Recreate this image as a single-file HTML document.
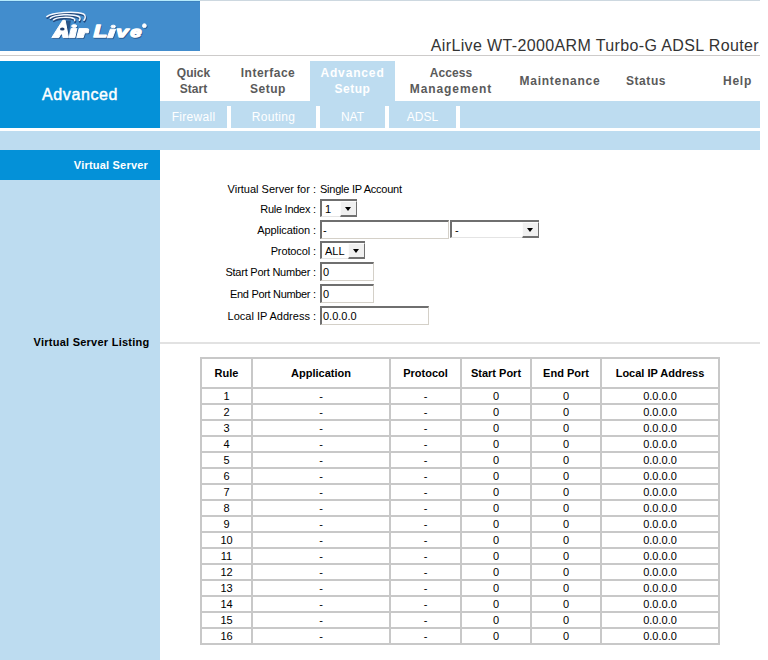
<!DOCTYPE html>
<html><head><meta charset="utf-8">
<style>
html,body{margin:0;padding:0;background:#fff;}
body{width:768px;height:660px;overflow:hidden;position:relative;font-family:"Liberation Sans",sans-serif;}
.a{position:absolute;}
.t{position:absolute;white-space:nowrap;line-height:1;}
.nav{position:absolute;font-size:12px;font-weight:bold;color:#5a5a5a;text-align:center;line-height:16px;white-space:nowrap;}
.sub{position:absolute;top:104px;height:27px;font-size:12px;color:#fff;text-align:center;line-height:27px;}
.sep{position:absolute;top:106px;width:4px;height:22px;background:#fff;}
.lbl{position:absolute;font-size:11px;color:#000;text-align:right;white-space:nowrap;line-height:1;}
.inp{position:absolute;box-sizing:border-box;border-style:solid;border-width:2px 1px 1px 2px;border-color:#6f6f6f #d4d0c8 #d4d0c8 #6f6f6f;background:#fff;font-size:11px;line-height:1;}
.sel{position:absolute;box-sizing:border-box;border-style:solid;border-width:2px 0 1px 2px;border-color:#6f6f6f #d4d0c8 #e4e4e4 #6f6f6f;background:#fff;font-size:11px;line-height:1;}
.btn{position:absolute;top:0;right:0;bottom:-1px;width:17px;box-sizing:border-box;background:#f0f0f0;border-style:solid;border-width:1px 1px 2px 1px;border-color:#fcfcfc #707070 #707070 #fcfcfc;}
.btn:after{content:"";position:absolute;left:4px;top:5px;border-left:3.5px solid transparent;border-right:3.5px solid transparent;border-top:4px solid #000;}
table.l{position:absolute;left:200px;top:357px;border-collapse:separate;border-spacing:0;border:1px solid #c8c8c8;font-size:11px;}
table.l td{border:1px solid #c8c8c8;padding:0;text-align:center;height:14px;line-height:14px;}
table.l tr.h td{height:28px;font-weight:bold;}
</style></head><body>
<div class="a" style="left:0;top:0;width:200px;height:1px;background:#b4eafc"></div><div class="a" style="left:200px;top:0;width:560px;height:1px;background:#cdd8e0"></div>
<div class="a" style="left:0;top:1px;width:200px;height:50px;background:#428dcd"></div><div class="a" style="left:0;top:1px;width:200px;height:1px;background:#3f83bf"></div>
<svg class="a" style="left:0;top:1px" width="200" height="50" viewBox="0 1 200 50">
<g fill="none" stroke-linecap="round">
<g stroke="#1c3d6e" stroke-width="2.2" opacity="0.85" transform="translate(0.5,1.2)">
<path d="M46.8,16.6 C52,12.5 75,10.5 83.5,14 C86,15.5 85.5,18.5 84,20.3"/>
<path d="M50.3,18.2 C55,14.5 72,13.5 78.5,16.5 C80.5,17.5 80.3,19 79.4,20.3"/>
<path d="M53.5,19.8 C57,17 70,16.5 73.8,18.7 C75,19.3 75,20 74.6,20.6"/>
</g>
<g stroke="#f4f8ff" stroke-width="1.5">
<path d="M46.8,16.6 C52,12.5 75,10.5 83.5,14 C86,15.5 85.5,18.5 84,20.3"/>
<path d="M50.3,18.2 C55,14.5 72,13.5 78.5,16.5 C80.5,17.5 80.3,19 79.4,20.3"/>
<path d="M53.5,19.8 C57,17 70,16.5 73.8,18.7 C75,19.3 75,20 74.6,20.6"/>
</g>
</g>
<path d="M65.2,20.6 L70.8,20.6 L68.8,35.5 Z" fill="#1c3d6e" opacity="0.7"/>

<g fill="#1c3d6e" stroke="#1c3d6e" opacity="0.6" transform="translate(0.8,0.9)">
<path d="M51.8,37.6 L62.8,20.3 L65.2,20.3 L68.4,37.6 L63,37.6 L62.4,34 L60.8,34 L58.8,37.6 Z"/>
<path d="M69.2,37.6 L71.2,28.6 L76.8,28.6 L74.8,37.6 Z"/>
<ellipse cx="74.2" cy="26.1" rx="2.6" ry="1.4"/>
<path d="M76.8,37.6 L79.2,28.6 L86,28.6 Q89.3,28.6 88.9,30 L88.3,32.8 L84.6,32.8 L83.2,37.6 Z"/>
<text x="93.4" y="37.2" font-family="Liberation Sans" font-weight="bold" font-style="italic" font-size="16.5" transform="translate(93.4,0) scale(1.38,1) translate(-93.4,0)" stroke-width="1.3" stroke-linejoin="round">L</text>
<path d="M107.3,37.7 L110.4,29.2 L115.6,29.2 L112.5,37.7 Z"/><ellipse cx="113.3" cy="26.5" rx="2.3" ry="1.3"/>
<text x="116.2" y="37.2" font-family="Liberation Sans" font-weight="bold" font-style="italic" font-size="15" transform="translate(116.2,0) scale(1.45,1) translate(-116.2,0)" stroke-width="1.3" stroke-linejoin="round">v</text><text x="130.2" y="37.2" font-family="Liberation Sans" font-weight="bold" font-style="italic" font-size="15" transform="translate(130.2,0) scale(1.35,1) translate(-130.2,0)" stroke-width="1.3" stroke-linejoin="round">e</text>
<circle cx="144.4" cy="25.7" r="1.9"/>
</g>
<g fill="#ffffff" stroke="#ffffff">
<path d="M51.8,37.6 L62.8,20.3 L65.2,20.3 L68.4,37.6 L63,37.6 L62.4,34 L60.8,34 L58.8,37.6 Z"/>
<path d="M69.2,37.6 L71.2,28.6 L76.8,28.6 L74.8,37.6 Z"/>
<ellipse cx="74.2" cy="26.1" rx="2.6" ry="1.4"/>
<path d="M76.8,37.6 L79.2,28.6 L86,28.6 Q89.3,28.6 88.9,30 L88.3,32.8 L84.6,32.8 L83.2,37.6 Z"/>
<text x="93.4" y="37.2" font-family="Liberation Sans" font-weight="bold" font-style="italic" font-size="16.5" transform="translate(93.4,0) scale(1.38,1) translate(-93.4,0)" stroke-width="1.3" stroke-linejoin="round">L</text>
<path d="M107.3,37.7 L110.4,29.2 L115.6,29.2 L112.5,37.7 Z"/><ellipse cx="113.3" cy="26.5" rx="2.3" ry="1.3"/>
<text x="116.2" y="37.2" font-family="Liberation Sans" font-weight="bold" font-style="italic" font-size="15" transform="translate(116.2,0) scale(1.45,1) translate(-116.2,0)" stroke-width="1.3" stroke-linejoin="round">v</text><text x="130.2" y="37.2" font-family="Liberation Sans" font-weight="bold" font-style="italic" font-size="15" transform="translate(130.2,0) scale(1.35,1) translate(-130.2,0)" stroke-width="1.3" stroke-linejoin="round">e</text>
<circle cx="144.4" cy="25.7" r="1.9"/>
</g>
<ellipse cx="62.3" cy="28.9" rx="2.3" ry="1.5" fill="#1c3d6e"/>
</svg>
<div class="a" style="left:0;top:55px;width:760px;height:1px;background:#cdcbca"></div>
<div class="t" style="right:9px;top:38px;font-size:16px;color:#333;letter-spacing:0.37px">AirLive WT-2000ARM Turbo-G ADSL Router</div>

<div class="a" style="left:0;top:61px;width:160px;height:67px;background:#0491d8"></div>
<div class="t" style="left:0;width:160px;top:87px;text-align:center;font-size:16px;color:#fff;letter-spacing:0.6px;-webkit-text-stroke:0.45px #fff">Advanced</div>

<div class="a" style="left:310px;top:61px;width:85px;height:40px;background:#bddcf0"></div>
<div class="nav" style="left:160px;width:67px;top:65px">Quick<br>Start</div>
<div class="nav" style="left:231px;width:74px;top:65px;letter-spacing:0.5px">Interface<br>Setup</div>
<div class="nav" style="left:310px;width:85px;top:65px;color:#fff;letter-spacing:0.85px">Advanced<br><span style="letter-spacing:0.5px">Setup</span></div>
<div class="nav" style="left:400px;width:102px;top:65px"><span style="letter-spacing:0.1px">Access</span><br><span style="letter-spacing:0.9px">Management</span></div>
<div class="nav" style="left:505px;width:110px;top:73px;letter-spacing:0.74px">Maintenance</div>
<div class="nav" style="left:616px;width:60px;top:73px;letter-spacing:0.56px">Status</div>
<div class="nav" style="left:710px;width:55px;top:73px;letter-spacing:0.77px">Help</div>

<div class="a" style="left:160px;top:101px;width:600px;height:27px;background:#bddcf0"></div>
<div class="sub" style="left:160px;width:67px;letter-spacing:0.3px">Firewall</div>
<div class="sub" style="left:231px;width:85px;letter-spacing:0.3px">Routing</div>
<div class="sub" style="left:320px;width:65px">NAT</div>
<div class="sub" style="left:389px;width:67px">ADSL</div>
<div class="sep" style="left:227px"></div>
<div class="sep" style="left:316px"></div>
<div class="sep" style="left:385px"></div>
<div class="sep" style="left:456px"></div>

<div class="a" style="left:0;top:131px;width:760px;height:19px;background:#bddcf0"></div>
<div class="a" style="left:0;top:150px;width:160px;height:30px;background:#0491d8"></div>
<div class="t" style="right:620px;top:160px;font-size:11px;font-weight:bold;color:#fff;letter-spacing:0.2px">Virtual Server</div>
<div class="a" style="left:0;top:180px;width:160px;height:480px;background:#bddcf0"></div>
<div class="t" style="right:618.5px;top:337px;font-size:11px;font-weight:bold;color:#000;letter-spacing:0.25px">Virtual Server Listing</div>

<div class="a" style="left:160px;top:342px;width:600px;height:2px;background:#e2e2e2"></div>

<!-- FORM -->
<div id="form"><div class="lbl" style="right:452.00px;top:184px;letter-spacing:0px">Virtual Server for :</div>
<div class="lbl" style="right:452.27px;top:204px;letter-spacing:-0.27px">Rule Index :</div>
<div class="lbl" style="right:452.10px;top:225px;letter-spacing:-0.1px">Application :</div>
<div class="lbl" style="right:452.12px;top:246px;letter-spacing:-0.12px">Protocol :</div>
<div class="lbl" style="right:452.23px;top:267px;letter-spacing:-0.23px">Start Port Number :</div>
<div class="lbl" style="right:452.32px;top:289px;letter-spacing:-0.32px">End Port Number :</div>
<div class="lbl" style="right:452.00px;top:311px;letter-spacing:0px">Local IP Address :</div>
<div class="t" style="left:320px;top:184px;font-size:11px;letter-spacing:-0.25px">Single IP Account</div>
<div class="sel" style="left:320px;top:199px;width:37px;height:18px"><span class="t" style="left:3px;top:3px">1</span><div class="btn"></div></div>
<div class="inp" style="left:320px;top:220px;width:129px;height:19px"><span class="t" style="left:1px;top:3px">-</span></div>
<div class="sel" style="left:450px;top:220px;width:89px;height:18px"><span class="t" style="left:3px;top:3px">-</span><div class="btn"></div></div>
<div class="sel" style="left:320px;top:241px;width:45px;height:18px"><span class="t" style="left:3px;top:3px">ALL</span><div class="btn"></div></div>
<div class="inp" style="left:320px;top:262px;width:54px;height:19px"><span class="t" style="left:1px;top:3px">0</span></div>
<div class="inp" style="left:320px;top:284px;width:54px;height:19px"><span class="t" style="left:1px;top:3px">0</span></div>
<div class="inp" style="left:320px;top:306px;width:109px;height:19px"><span class="t" style="left:1px;top:3px">0.0.0.0</span></div></div>

<!-- TABLE -->
<table class="l" id="tbl">
<tr class="h"><td style="width:49px">Rule</td><td style="width:136px">Application</td><td style="width:69px">Protocol</td><td style="width:68px">Start Port</td><td style="width:68px">End Port</td><td style="width:116px">Local IP Address</td></tr>
<tr><td>1</td><td>-</td><td>-</td><td>0</td><td>0</td><td>0.0.0.0</td></tr>
<tr><td>2</td><td>-</td><td>-</td><td>0</td><td>0</td><td>0.0.0.0</td></tr>
<tr><td>3</td><td>-</td><td>-</td><td>0</td><td>0</td><td>0.0.0.0</td></tr>
<tr><td>4</td><td>-</td><td>-</td><td>0</td><td>0</td><td>0.0.0.0</td></tr>
<tr><td>5</td><td>-</td><td>-</td><td>0</td><td>0</td><td>0.0.0.0</td></tr>
<tr><td>6</td><td>-</td><td>-</td><td>0</td><td>0</td><td>0.0.0.0</td></tr>
<tr><td>7</td><td>-</td><td>-</td><td>0</td><td>0</td><td>0.0.0.0</td></tr>
<tr><td>8</td><td>-</td><td>-</td><td>0</td><td>0</td><td>0.0.0.0</td></tr>
<tr><td>9</td><td>-</td><td>-</td><td>0</td><td>0</td><td>0.0.0.0</td></tr>
<tr><td>10</td><td>-</td><td>-</td><td>0</td><td>0</td><td>0.0.0.0</td></tr>
<tr><td>11</td><td>-</td><td>-</td><td>0</td><td>0</td><td>0.0.0.0</td></tr>
<tr><td>12</td><td>-</td><td>-</td><td>0</td><td>0</td><td>0.0.0.0</td></tr>
<tr><td>13</td><td>-</td><td>-</td><td>0</td><td>0</td><td>0.0.0.0</td></tr>
<tr><td>14</td><td>-</td><td>-</td><td>0</td><td>0</td><td>0.0.0.0</td></tr>
<tr><td>15</td><td>-</td><td>-</td><td>0</td><td>0</td><td>0.0.0.0</td></tr>
<tr><td>16</td><td>-</td><td>-</td><td>0</td><td>0</td><td>0.0.0.0</td></tr>
</table>
</body></html>
